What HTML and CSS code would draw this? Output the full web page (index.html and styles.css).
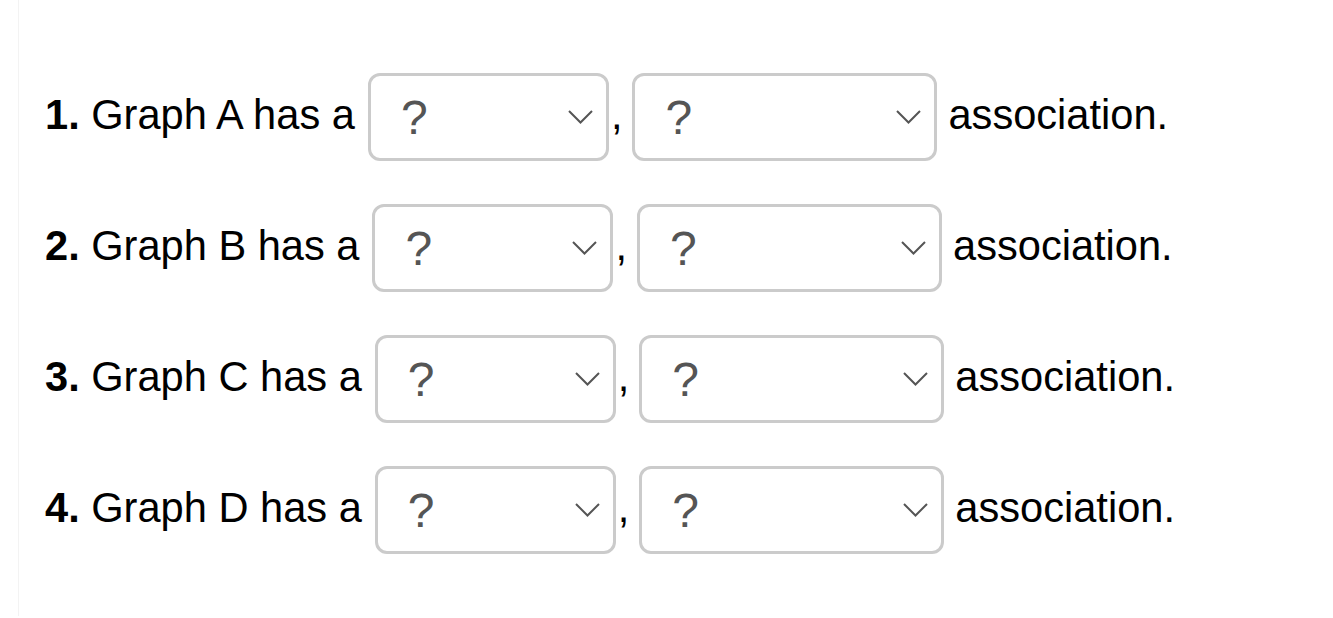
FILE: index.html
```html
<!DOCTYPE html>
<html>
<head>
<meta charset="utf-8">
<link rel="stylesheet" href="styles.css">
</head>
<body>
<div class="panel">
  <div class="row">
    <span class="label"><b>1.</b> Graph A has a</span>
    <span class="select small"><span class="q">?</span><svg class="chev" width="25" height="14" viewBox="0 0 25 14"><path d="M1 1 L12.5 12.5 L24 1" fill="none" stroke="#555" stroke-width="2"/></svg></span><span class="comma">,</span>
    <span class="select large"><span class="q">?</span><svg class="chev" width="25" height="14" viewBox="0 0 25 14"><path d="M1 1 L12.5 12.5 L24 1" fill="none" stroke="#555" stroke-width="2"/></svg></span>
    <span class="tail">association.</span>
  </div>
  <div class="row">
    <span class="label"><b>2.</b> Graph B has a</span>
    <span class="select small"><span class="q">?</span><svg class="chev" width="25" height="14" viewBox="0 0 25 14"><path d="M1 1 L12.5 12.5 L24 1" fill="none" stroke="#555" stroke-width="2"/></svg></span><span class="comma">,</span>
    <span class="select large"><span class="q">?</span><svg class="chev" width="25" height="14" viewBox="0 0 25 14"><path d="M1 1 L12.5 12.5 L24 1" fill="none" stroke="#555" stroke-width="2"/></svg></span>
    <span class="tail">association.</span>
  </div>
  <div class="row">
    <span class="label"><b>3.</b> Graph C has a</span>
    <span class="select small"><span class="q">?</span><svg class="chev" width="25" height="14" viewBox="0 0 25 14"><path d="M1 1 L12.5 12.5 L24 1" fill="none" stroke="#555" stroke-width="2"/></svg></span><span class="comma">,</span>
    <span class="select large"><span class="q">?</span><svg class="chev" width="25" height="14" viewBox="0 0 25 14"><path d="M1 1 L12.5 12.5 L24 1" fill="none" stroke="#555" stroke-width="2"/></svg></span>
    <span class="tail">association.</span>
  </div>
  <div class="row">
    <span class="label"><b>4.</b> Graph D has a</span>
    <span class="select small"><span class="q">?</span><svg class="chev" width="25" height="14" viewBox="0 0 25 14"><path d="M1 1 L12.5 12.5 L24 1" fill="none" stroke="#555" stroke-width="2"/></svg></span><span class="comma">,</span>
    <span class="select large"><span class="q">?</span><svg class="chev" width="25" height="14" viewBox="0 0 25 14"><path d="M1 1 L12.5 12.5 L24 1" fill="none" stroke="#555" stroke-width="2"/></svg></span>
    <span class="tail">association.</span>
  </div>
</div>
</body>
</html>
```

FILE: styles.css
```css
html, body {
  margin: 0;
  padding: 0;
  background: #fff;
}
body {
  font-family: "Liberation Sans", Arial, sans-serif;
  font-size: 41.6px;
  color: #000;
}
.panel {
  margin-left: 18px;
  border-left: 1px solid #f3f3f3;
  height: 616px;
  box-sizing: border-box;
  padding: 73px 0 0 26px;
  display: flex;
  flex-direction: column;
  gap: 43px;
}
.row {
  display: flex;
  align-items: center;
  height: 88px;
  white-space: nowrap;
}
.label, .tail, .comma {
  line-height: 47px;
  margin-bottom: 6px;
}
.label b {
  font-weight: 700;
}
.select {
  box-sizing: border-box;
  height: 88px;
  border: 3px solid #cbcbcb;
  border-radius: 12px;
  display: flex;
  align-items: center;
  justify-content: space-between;
  padding: 0 13px 0 30px;
  margin-left: 13px;
  background: #fff;
}
.select.small { width: 241px; }
.select.large { width: 305px; }
.q {
  color: #555;
  font-size: 48px;
  line-height: 54px;
  margin-top: 2px;
}
.chev {
  display: block;
}
.comma {
  margin-left: 2px;
}
.comma + .select { margin-left: 10px; }
.tail {
  margin-left: 11px;
}
```
